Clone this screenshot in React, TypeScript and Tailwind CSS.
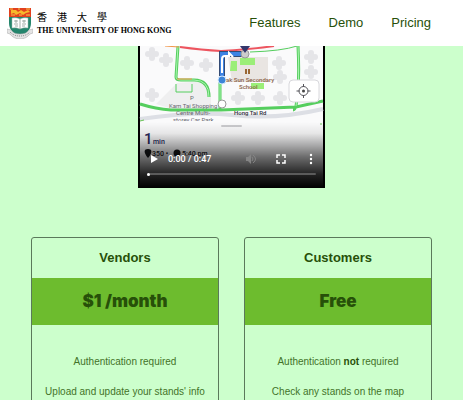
import type { ReactNode } from "react";

const navLinks = ["Features", "Demo", "Pricing"];

function Crest() {
  return (
    <svg viewBox="0 0 26 32" className="h-8 w-[26px] shrink-0" aria-hidden="true">
      <path d="M2 1h22v15c0 7-5 11-11 14C7 27 2 23 2 16z" fill="#24856c" />
      <path d="M2 1h22v9H2z" fill="#e2401e" />
      <path d="M4 3h5l2 2 3-2 3 2 4-2 2 2-4 1-3 2-3-2-4 2-2-2-3 1z" fill="#f6b92c" />
      <path d="M3 2h3M11 2h2M19 2h4M4 8h4M12 8h3M19 8h4" stroke="#f9c64a" strokeWidth="1" />
      <path d="M5 11q4-1 8 1q4-2 8-1v10q-4-1-8 1q-4-2-8-1z" fill="#fff" stroke="#9db5a8" strokeWidth=".5" />
      <path d="M13 12v10M7 14h4M9 13v3M7 17h4M8 19h3M15 14h4M17 13v3M15 17h4M15 19h3" stroke="#7d8c84" strokeWidth=".7" />
      <path d="M0 22l4 1c2 3 5 4 9 4s7-1 9-4l4-1v4l-3 1c-2 3-6 5-10 5s-8-2-10-5l-3-1z" fill="#e4e4e4" stroke="#a2a2a2" strokeWidth=".5" />
      <path d="M3 25c3 3 6 4 10 4c4 0 7-1 10-4" fill="none" stroke="#8c8c8c" strokeWidth="1" strokeDasharray="1 1" />
    </svg>
  );
}

function Tree({ x, y }: { x: number; y: number }) {
  return (
    <g fill="#e5e5e8">
      <circle cx={x} cy={y - 4} r="3" />
      <circle cx={x - 4} cy={y} r="3" />
      <circle cx={x + 4} cy={y} r="3" />
      <circle cx={x} cy={y + 4} r="3" />
      <rect x={x - 3} y={y - 3} width="6" height="6" />
    </g>
  );
}

const trees = [
  [152, 54], [166, 60], [187, 63], [206, 65], [152, 95], [279, 63], [280, 77],
  [238, 98], [258, 98], [280, 98], [311, 57], [311, 72],
];

function MapFrame() {
  return (
    <svg viewBox="138 46 187 142" className="block w-full" role="img" aria-label="Route map near Tak Sun Secondary School">
      <defs>
        <linearGradient id="shade" x1="0" y1="0" x2="0" y2="1">
          <stop offset="0" stopColor="#000" stopOpacity="0" />
          <stop offset=".17" stopColor="#000" stopOpacity=".08" />
          <stop offset=".35" stopColor="#000" stopOpacity=".32" />
          <stop offset=".53" stopColor="#000" stopOpacity=".57" />
          <stop offset=".8" stopColor="#000" stopOpacity=".87" />
          <stop offset="1" stopColor="#000" />
        </linearGradient>
      </defs>
      <rect x="138" y="46" width="187" height="142" fill="#000" />
      <rect x="140" y="46" width="183" height="142" fill="#fafafb" />
      <path d="M177 83l26-2l8 13v16h-36l-19-6z" fill="#efeff0" />
      {trees.map(([x, y]) => <Tree key={`${x}-${y}`} x={x} y={y} />)}
      <path d="M228 57h40v25h-36z" fill="#e9e5e2" />
      <path d="M240 58h15v7h-15zM231 61h6v10h-7zM251 83h13v6h-13z" fill="#9bee78" />
      <path d="M246 69v5m3-5v5" stroke="#996633" strokeWidth="2" />
      <path d="M140 119q55-8 92-4q44 5 91-6" fill="none" stroke="#dddfe5" strokeWidth="4" />
      <g fill="none" stroke="#55ce5e" strokeWidth="3">
        <path d="M178 46l-2 31q0 3 5 3h13q15 0 15 17M140 104q16 5 31 6h50l75-3l27-6M220 80v29M298 46q2 38-2 60q-1 4-3 4" />
        <path d="M250 52q32-1 47-6" strokeWidth="1" />
        <path d="M176 84v8h16v-8" strokeWidth="1" />
      </g>
      <g fill="none" stroke="#a9f5b0" strokeWidth="1">
        <path d="M178 46l-2 31q0 3 5 3h13q15 0 15 17M220 80v28M298 46q2 38-2 60" />
      </g>
      <path d="M165 46l14 1M177 79h15" stroke="#f29647" strokeWidth="1" />
      <path d="M180 47q22 3 41 4q32-2 53-5" fill="none" stroke="#ed555f" strokeWidth="2" />
      <path d="M222 76V54h20" fill="none" stroke="#344b74" strokeWidth="6" />
      <path d="M222 76V54h20" fill="none" stroke="#3d83e3" strokeWidth="4" />
      <path d="M222 73V59q0-3 3-3h4v-3l4 4" fill="none" stroke="#fff" strokeWidth="2" />
      <circle cx="222" cy="80" r="4" fill="#3c84d7" stroke="#d5e8fc" />
      <circle cx="222" cy="104" r="4" fill="#fff" stroke="#999" />
      <circle cx="245" cy="54" r="4" fill="#ccc" stroke="#999" />
      <path d="M240 46h10l-5 7z" fill="#34366c" />
      <g fill="#66666e" fontFamily="Roboto, sans-serif" fontSize="6">
        <text x="190" y="100">P</text>
        <text x="169" y="108">Kam Tai Shopping</text>
        <text x="176" y="115">Centre Multi-</text>
        <text x="173" y="122">storey Car Park</text>
      </g>
      <path d="M172 121h48v5h-48z" fill="#fafafb" />
      <g fill="#896044" fontFamily="Roboto, sans-serif" fontSize="6" fontWeight="500">
        <text x="226" y="82">ak Sun Secondary</text>
        <text x="239" y="89">School</text>
      </g>
      <text x="234" y="115" fontFamily="Roboto, sans-serif" fontSize="6" fontWeight="500" fill="#30303b">Hong Tai Rd</text>
      <rect x="289" y="80" width="30" height="22" rx="4" fill="#fff" stroke="#d8d8dc" />
      <g stroke="#55555b" fill="none">
        <circle cx="303.500" cy="91" r="4.500" />
        <path d="M303.500 84v3m0 8v3m-7-7h3m8 0h3" />
      </g>
      <circle cx="303.500" cy="91" r="1.500" fill="#444" />
      <path d="M140 121l4-1m177 3v2" stroke="#6ac657" />
      <rect x="221" y="125" width="21" height="2" rx="1" fill="#cbcbce" />
      <g fontFamily="Roboto, sans-serif" fontWeight="500" fill="#29295b">
        <text x="144" y="144" fontSize="15">1</text>
        <text x="153" y="144" fontSize="7">min</text>
        <text x="152" y="156" fontSize="7" fill="#18181d">350 •</text>
        <text x="182" y="156" fontSize="7" fill="#18181d">5:40 pm</text>
      </g>
      <path d="M148 158c-5-6-4-9 0-9s5 3 0 9z" fill="#161719" />
      <circle cx="177" cy="153" r="3.500" fill="#161719" />
      <rect x="138" y="122" width="187" height="66" fill="url(#shade)" />
    </svg>
  );
}

function Player() {
  return (
    <div className="relative mx-auto w-[187px]">
      <MapFrame />
      <div className="absolute inset-x-0 bottom-0 pb-[9px]">
        <div className="flex h-5 items-center pr-2 pl-[10px] text-white">
          <button aria-label="Play" className="w-5">
            <svg viewBox="0 0 12 12" className="size-3" fill="currentColor"><path d="M3 2l7 4l-7 4z" /></svg>
          </button>
          <span className="whitespace-nowrap font-[Roboto,sans-serif] text-[9px] leading-3 font-medium">0:00 / 0:47</span>
          <button aria-label="Mute" disabled className="ml-auto text-[#858585]">
            <svg viewBox="0 0 12 12" className="size-3" fill="currentColor">
              <path d="M1 4h2l3-3v10L3 8H1z" />
              <path d="M7 4q2 2 0 4M8 2q5 4 0 8" fill="none" stroke="currentColor" />
            </svg>
          </button>
          <button aria-label="Full screen" className="ml-[18px]">
            <svg viewBox="0 0 12 12" className="size-3" fill="none" stroke="currentColor" strokeWidth="1.500"><path d="M2 5V2h3M7 2h3v3M10 7v3H7M5 10H2V7" /></svg>
          </button>
          <button aria-label="More options" className="ml-[18px]">
            <svg viewBox="0 0 12 12" className="size-3" fill="currentColor"><circle cx="6" cy="2" r="1.200" /><circle cx="6" cy="6" r="1.200" /><circle cx="6" cy="10" r="1.200" /></svg>
          </button>
        </div>
        <div className="flex h-[10px] items-center px-[9px]">
          <input
            type="range"
            aria-label="Playback position"
            min={0}
            max={47}
            defaultValue={0}
            className="h-[2px] w-full appearance-none rounded-full bg-[#5b5b5b] [&::-webkit-slider-thumb]:size-[3px] [&::-webkit-slider-thumb]:appearance-none [&::-webkit-slider-thumb]:rounded-full [&::-webkit-slider-thumb]:bg-white"
          />
        </div>
      </div>
    </div>
  );
}

function Plan({ title, price, children }: { title: string; price: string; children: ReactNode }) {
  return (
    <article className="rounded-[3px] border border-[#5b795b] pb-8 text-center text-[#275009]">
      <h2 className="py-3 text-[13px] leading-4 font-bold">{title}</h2>
      <p className="bg-[#6dbc2e] py-3 font-[Inter,sans-serif] text-[17px] leading-[23px] font-black">{price}</p>
      <ul className="mt-[29px] flex flex-col gap-[14px] text-[10px] leading-4 text-[#437329]">{children}</ul>
    </article>
  );
}

export default function App() {
  return (
    <div className="h-screen overflow-hidden bg-[#ccffcc] font-['Liberation_Sans',Arial,sans-serif]">
      <header className="flex h-[46px] items-center justify-between bg-white pr-8 pl-[7px]">
        <a href="#home" className="flex items-center gap-1 text-black">
          <Crest />
          <span className="flex flex-col gap-[2px] whitespace-nowrap font-['Liberation_Serif','Noto_Sans_CJK_TC',serif]">
            <span lang="zh-Hant" className="flex gap-[10px] text-[10px] leading-3">
              <span>香</span><span>港</span><span>大</span><span>學</span>
            </span>
            <span className="text-[8px] leading-[9px] font-bold">THE UNIVERSITY OF HONG KONG</span>
          </span>
        </a>
        <nav className="flex gap-7 text-[13px] leading-4 text-[#275009]">
          {navLinks.map((label) => <a key={label} href={`#${label.toLowerCase()}`}>{label}</a>)}
        </nav>
      </header>
      <main>
        <section id="demo"><Player /></section>
        <section id="pricing" className="mt-[49px] grid grid-cols-2 gap-[25px] px-[31px]">
          <Plan title="Vendors" price="$1 /month">
            <li>Authentication required</li>
            <li>Upload and update your stands' info</li>
          </Plan>
          <Plan title="Customers" price="Free">
            <li>Authentication <b className="text-[#275009]">not</b> required</li>
            <li>Check any stands on the map</li>
          </Plan>
        </section>
      </main>
    </div>
  );
}
